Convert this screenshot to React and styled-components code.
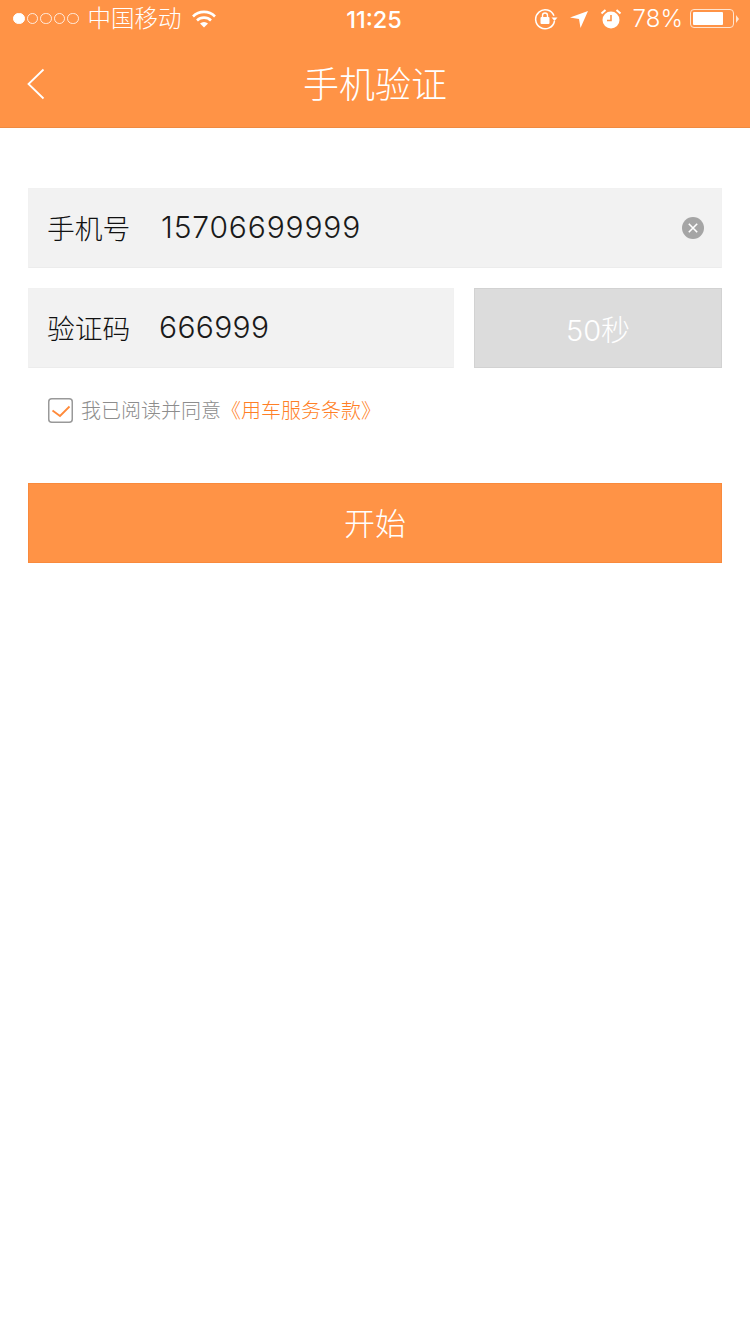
import React from "react";
import styled, { createGlobalStyle } from "styled-components";

const Global = createGlobalStyle`
  html, body { margin: 0; padding: 0; background: #fff; }
  * { box-sizing: border-box; }
  body { font-family: Inter, "Noto Sans CJK SC", sans-serif; font-weight: 300; }
`;
const Page = styled.div`width: 750px; height: 1334px; background: #fff; overflow: hidden;`;
const Header = styled.header`height: 128px; background: #ff9346; border-bottom: 1px solid #ee8a42; color: #fff;`;
const TopWrap = styled.div`position: relative;`;
const StatusBar = styled.div`height: 40px; display: flex; align-items: center; justify-content: space-between; padding: 0 11px 3px 13px;`;
const StatusSide = styled.div`display: flex; align-items: center;`;
const Signal = styled.div`display: flex; gap: 2px; margin-right: 9px;`;
const Dot = styled.span`
  width: 11.5px; height: 11.5px; border-radius: 50%; border: 1px solid #fff;
  background: ${p => (p.$on ? "#fff" : "transparent")}; opacity: ${p => (p.$on ? 1 : 0.8)};
`;
const Carrier = styled.span`font-size: 23.5px; line-height: 30px; font-family: "Noto Sans CJK SC", sans-serif; font-weight: 300; margin: -3px 9px 0 0;`;
const Clock = styled.span`
  position: absolute; left: 0; right: 0; top: 6px; text-align: center; font-size: 23.5px; line-height: 28px;
  font-family: Inter, sans-serif; font-weight: 500; padding-right: 2px;
`;
const Percent = styled.span`font-size: 24px; line-height: 30px; margin: 0 7px 0 10px; font-family: Inter, sans-serif; font-weight: 300; letter-spacing: .1px;`;
const Battery = styled.div`width: 49px; height: 20px; display: flex; align-items: center;`;
const BatteryBody = styled.div`
  width: 44px; height: 19px; border: 1px solid #ffe4cf; border-radius: 4px; padding: 2px;
  & > div { width: 78%; height: 100%; background: #fff; border-radius: 1px; }
`;
const BatteryTip = styled.svg`margin-left: 2px; flex: none;`;
const Nav = styled.div`position: relative; height: 87px; display: flex; align-items: center; justify-content: center; padding-bottom: 4px;`;
const Title = styled.h1`margin: 0; font-size: 36px; line-height: 46px; font-weight: 300; font-family: "Noto Sans CJK SC", sans-serif;`;
const Back = styled.svg`position: absolute; left: 27px; top: 28px;`;
const Form = styled.main`padding: 60px 28px 0; display: flex; flex-direction: column;`;
const Row = styled.div`display: flex; gap: 20px; margin-bottom: 20px;`;
const Field = styled.div`
  flex: ${p => p.$w ? `0 0 ${p.$w}px` : 1}; height: 80px; background: #f2f2f2; border: 1px solid #f1f1f1;
  border-bottom-color: #ececec; display: flex; align-items: center; padding: 0 17px 2px 18px; color: #1c1c1c;
`;
const Label = styled.span`font-size: 27.8px; font-family: "Noto Sans CJK SC", sans-serif; font-weight: 300; width: ${p => p.$w}px; flex: none; color: #111;`;
const Value = styled.span`font-size: 30px; letter-spacing: ${p => p.$ls}px; flex: 1; font-weight: 300; color: #1a1a1a;`;
const Clear = styled.svg`flex: none; margin-top: 2px;`;
const Timer = styled.button`
  flex: 1; height: 80px; padding: 0; background: #dcdcdc; border: 1px solid #d2d2d2; color: #fff;
  font: 300 29px Inter, "Noto Sans CJK SC", sans-serif;
`;
const Agreement = styled.label`display: flex; align-items: center; margin: 8px 0 0 20px; font-size: 20px; line-height: 28px; color: #8d8d8d; font-family: "Noto Sans CJK SC", sans-serif; font-weight: 300;`;
const Check = styled.svg`margin-right: 8px; flex: none;`;
const Terms = styled.span`color: #ff7f26;`;
const Start = styled.button`
  margin-top: 59px; height: 80px; background: #ff9346; border: 1px solid #f98a3c; color: #fff;
  font-size: 31px; font-family: "Noto Sans CJK SC", sans-serif; font-weight: 300; padding: 0 0 3px;
`;

export default function App() {
  return (
    <Page>
      <Global />
      <Header>
        <TopWrap>
          <StatusBar>
            <StatusSide>
              <Signal>
                <Dot $on /><Dot /><Dot /><Dot /><Dot />
              </Signal>
              <Carrier>中国移动</Carrier>
              <svg width="26" height="20" viewBox="0 0 26 20" fill="none" stroke="#fff" strokeWidth="2.6">
                <path d="M2 7.5a15.5 15.5 0 0 1 22 0" />
                <path d="M6 11.5a10 10 0 0 1 14 0" />
                <path d="M13 18.5l-4-4a6 6 0 0 1 8 0z" fill="#fff" stroke="none" />
              </svg>
            </StatusSide>
            <Clock>11:25</Clock>
            <StatusSide>
              <svg width="24" height="22" viewBox="0 0 24 22" fill="none">
                <path d="M20.5 13A9.5 9.5 0 1 1 20 7.8" stroke="#fff" strokeWidth="1.5" />
                <path d="M17.5 9.5h6l-3 3.6z" fill="#fff" />
                <rect x="6.5" y="9" width="9" height="7" rx="1" fill="#fff" />
                <path d="M8.5 9V7.5a2.5 2.5 0 0 1 5 0V9" stroke="#fff" strokeWidth="1.4" />
              </svg>
              <svg width="18" height="18" viewBox="0 0 18 18" style={{ marginLeft: 12 }}>
                <path d="M18 1L10.5 18 9 9 0 7.5z" fill="#fff" />
              </svg>
              <svg width="22" height="22" viewBox="0 0 22 22" style={{ marginLeft: 12 }} fill="none">
                <circle cx="11" cy="12" r="8.5" fill="#fff" />
                <path d="M11 7v5.5H7" stroke="#ff9346" strokeWidth="1.6" />
                <path d="M1.5 5.5L5.5 2M20.5 5.5L16.5 2" stroke="#fff" strokeWidth="2" />
              </svg>
              <Percent>78%</Percent>
              <Battery>
                <BatteryBody><div /></BatteryBody>
                <BatteryTip width="3" height="8" viewBox="0 0 3 8"><path d="M0 0l3 4-3 4z" fill="#ffe4cf" /></BatteryTip>
              </Battery>
            </StatusSide>
          </StatusBar>
          <Nav>
            <Back width="20" height="32" viewBox="0 0 20 32" fill="none" stroke="#fff" strokeWidth="1.8">
              <path d="M16.5 1.5L1.5 16l15 14.5" />
            </Back>
            <Title>手机验证</Title>
          </Nav>
        </TopWrap>
      </Header>
      <Form>
        <Row>
          <Field>
            <Label $w={114}>手机号</Label>
            <Value $ls={0.85}>15706699999</Value>
            <Clear width="22" height="22" viewBox="0 0 22 22" fill="none">
              <circle cx="11" cy="11" r="11" fill="#a5a5a5" />
              <path d="M6.8 6.8l8.4 8.4M15.2 6.8l-8.4 8.4" stroke="#fff" strokeWidth="1.6" />
            </Clear>
          </Field>
        </Row>
        <Row>
          <Field $w={426}>
            <Label $w={112}>验证码</Label>
            <Value $ls={0.35}>666999</Value>
          </Field>
          <Timer>50秒</Timer>
        </Row>
        <Agreement>
          <Check width="25" height="25" viewBox="0 0 25 25" fill="none">
            <rect x=".75" y=".75" width="23.5" height="23.5" rx="3" fill="#fff" stroke="#999" strokeWidth="1.5" />
            <path d="M4.5 12.5l7.5 5.5 9.5-9.5" stroke="#ff8a3a" strokeWidth="1.8" />
          </Check>
          我已阅读并同意<Terms>《用车服务条款》</Terms>
        </Agreement>
        <Start>开始</Start>
      </Form>
    </Page>
  );
}
